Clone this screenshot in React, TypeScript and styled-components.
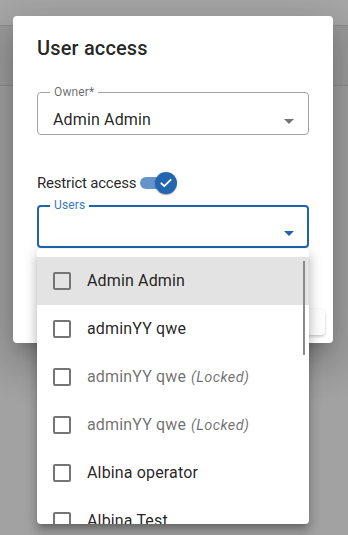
import React from "react";
import styled, { createGlobalStyle } from "styled-components";

const GlobalStyle = createGlobalStyle`
  html, body { margin: 0; padding: 0; height: 100%; overflow: hidden; }
  body { font-family: Roboto, "Liberation Sans", Arial, sans-serif; }
  * { box-sizing: border-box; }
`;

const Page = styled.div`
  position: relative;
  width: 348px;
  height: 535px;
  background: #a2a2a2;
  display: flex;
  flex-direction: column;
  overflow: hidden;
`;

const TopBar = styled.div`
  height: 26px;
  background: #a7a7a7;
  border-bottom: 1px solid #8e8e8e;
`;

const SubBar = styled.div`
  height: 60px;
  background: linear-gradient(#9a9a9a, #9e9e9e);
  border-bottom: 1px solid #8e8e8e;
`;

const Dialog = styled.div`
  position: absolute;
  top: 16px;
  left: 13px;
  width: 320px;
  background: #fff;
  border-radius: 4px;
  box-shadow: 0 11px 15px -7px rgba(0,0,0,0.2), 0 24px 38px 3px rgba(0,0,0,0.14), 0 9px 46px 8px rgba(0,0,0,0.12);
  display: flex;
  flex-direction: column;
`;

const Title = styled.h2`
  margin: 0;
  padding: 16px 24px;
  font-size: 20px;
  font-weight: 500;
  line-height: 32px;
  letter-spacing: 0.15px;
  color: rgba(0,0,0,0.87);
`;

const Content = styled.div`
  padding: 12px 24px 53px;
  display: flex;
  flex-direction: column;
`;

const Field = styled.div<{ $focused?: boolean }>`
  position: relative;
  height: 43px;
  border: ${(p) => (p.$focused ? "2px solid #1f64ae" : "1px solid #a3a3a3")};
  border-radius: 4px;
  display: flex;
  align-items: center;
  padding: ${(p) => (p.$focused ? "12px 13px 0 15px" : "13px 14px 0 15px")};
`;

const FieldLabel = styled.span<{ $focused?: boolean }>`
  position: absolute;
  top: ${(p) => (p.$focused ? "-9px" : "-8px")};
  left: ${(p) => (p.$focused ? "11px" : "12px")};
  padding: 0 4px;
  background: #fff;
  font-size: 12px;
  line-height: 14px;
  letter-spacing: 0.15px;
  color: ${(p) => (p.$focused ? "#3b78c0" : "rgba(0,0,0,0.6)")};
`;

const FieldValue = styled.span`
  flex: 1;
  font-size: 16px;
  line-height: 24px;
  letter-spacing: 0.15px;
  color: rgba(0,0,0,0.87);
`;

const Arrow = styled.span<{ $focused?: boolean }>`
  width: 0;
  height: 0;
  border-left: 5px solid transparent;
  border-right: 5px solid transparent;
  border-top: 5px solid ${(p) => (p.$focused ? "#1f64ae" : "rgba(0,0,0,0.54)")};
  margin-top: 2px;
`;

const SwitchRow = styled.div`
  margin-top: 36px;
  height: 24px;
  display: flex;
  align-items: center;
  gap: 4px;
  margin-bottom: 10px;
`;

const RowLabel = styled.span`
  font-size: 15px;
  line-height: 24px;
  letter-spacing: -0.2px;
  color: rgba(0,0,0,0.87);
`;

const SwitchTrack = styled.span`
  position: relative;
  width: 37px;
  height: 24px;
  display: flex;
  align-items: center;
  &::before {
    content: "";
    width: 30px;
    height: 12px;
    border-radius: 6px;
    background: #6594cc;
  }
`;

const SwitchThumb = styled.span`
  position: absolute;
  right: 0;
  top: 1px;
  width: 22px;
  height: 22px;
  border-radius: 50%;
  background: #2366b0;
  box-shadow: 0 2px 1px -1px rgba(0,0,0,0.2), 0 1px 1px 0 rgba(0,0,0,0.14), 0 1px 3px 0 rgba(0,0,0,0.12);
  display: flex;
  align-items: center;
  justify-content: center;
`;

const Actions = styled.div`
  padding: 8px;
  display: flex;
  justify-content: flex-end;
`;

const ActionButton = styled.button`
  height: 26px;
  min-width: 76px;
  border: none;
  border-radius: 4px;
  background: #fdfdfd;
  box-shadow: 0 2px 3px rgba(0,0,0,0.18), 0 0 2px rgba(0,0,0,0.08);
  font-family: inherit;
  font-size: 14px;
  font-weight: 500;
  color: rgba(0,0,0,0.26);
  text-transform: uppercase;
`;

const Menu = styled.div`
  position: absolute;
  top: 249px;
  left: 37px;
  width: 272px;
  height: 275px;
  background: #fff;
  border-radius: 4px;
  overflow: hidden;
  box-shadow: 0 5px 5px -3px rgba(0,0,0,0.2), 0 8px 10px 1px rgba(0,0,0,0.14), 0 3px 14px 2px rgba(0,0,0,0.12);
`;

const List = styled.ul`
  margin: 0;
  padding: 8px 0 0;
  list-style: none;
`;

const Item = styled.li<{ $active?: boolean }>`
  height: 48px;
  display: flex;
  align-items: center;
  padding-left: 16px;
  gap: 16px;
  background: ${(p) => (p.$active ? "#e3e3e3" : "transparent")};
`;

const Box = styled.span`
  width: 18px;
  height: 18px;
  border: 2px solid #757575;
  border-radius: 2px;
  flex: none;
`;

const ItemText = styled.span<{ $locked?: boolean }>`
  font-size: 16px;
  line-height: 24px;
  letter-spacing: 0.15px;
  white-space: nowrap;
  color: ${(p) => (p.$locked ? "rgba(0,0,0,0.58)" : "rgba(0,0,0,0.87)")};
`;

const Locked = styled.em`
  font-size: 14.5px;
  letter-spacing: 0.4px;
  margin-left: 5px;
`;

const ScrollThumb = styled.span`
  position: absolute;
  top: 12px;
  right: 4px;
  width: 2px;
  height: 94px;
  background: #8a8a8a;
`;

const users: { name: string; locked?: boolean }[] = [
  { name: "Admin Admin" },
  { name: "adminYY qwe" },
  { name: "adminYY qwe", locked: true },
  { name: "adminYY qwe", locked: true },
  { name: "Albina operator" },
  { name: "Albina Test" },
];

export default function App() {
  return (
    <>
      <GlobalStyle />
      <Page>
        <TopBar />
        <SubBar />
        <Dialog>
          <Title>User access</Title>
          <Content>
            <Field>
              <FieldLabel>Owner*</FieldLabel>
              <FieldValue>Admin Admin</FieldValue>
              <Arrow />
            </Field>
            <SwitchRow>
              <RowLabel>Restrict access</RowLabel>
              <SwitchTrack>
                <SwitchThumb>
                  <svg width="14" height="14" viewBox="0 0 24 24">
                    <path d="M4 12.5l5 5L20 6.5" fill="none" stroke="#fff" strokeWidth="3" strokeLinecap="round" strokeLinejoin="round" />
                  </svg>
                </SwitchThumb>
              </SwitchTrack>
            </SwitchRow>
            <Field $focused>
              <FieldLabel $focused>Users</FieldLabel>
              <FieldValue />
              <Arrow $focused />
            </Field>
          </Content>
          <Actions>
            <ActionButton>Save</ActionButton>
          </Actions>
        </Dialog>
        <Menu>
          <List>
            {users.map((u, i) => (
              <Item key={i} $active={i === 0}>
                <Box />
                <ItemText $locked={u.locked}>
                  {u.name}
                  {u.locked && <Locked>(Locked)</Locked>}
                </ItemText>
              </Item>
            ))}
          </List>
          <ScrollThumb />
        </Menu>
      </Page>
    </>
  );
}
